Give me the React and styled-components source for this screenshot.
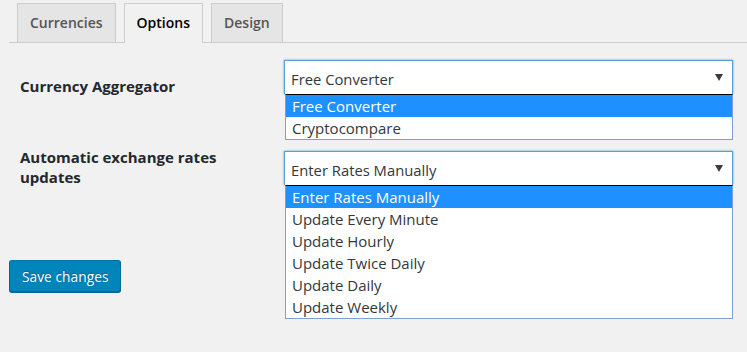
import React from 'react'
import styled, { createGlobalStyle } from 'styled-components'

const Global = createGlobalStyle`
  html, body { margin: 0; padding: 0; background: #f1f1f1; }
  body { font-family: "Open Sans", "Noto Sans", "Liberation Sans", sans-serif; color: #23282d; }
`

const Page = styled.div`
  width: 747px;
  height: 352px;
  padding: 3px 0 0 9px;
  box-sizing: border-box;
  overflow: hidden;
`

const Nav = styled.div`
  display: flex;
  align-items: flex-end;
  gap: 8px;
  padding-left: 8px;
  border-bottom: 1px solid #ccc;
`

const Tab = styled.div`
  line-height: 38px;
  padding: 0 12px;
  border: 1px solid #ccc;
  border-bottom: none;
  background: ${p => (p.$active ? '#f1f1f1' : '#e5e5e5')};
  color: ${p => (p.$active ? '#000' : '#555')};
  font-size: 14px;
  font-weight: 600;
  margin-bottom: ${p => (p.$active ? '-1px' : '0')};
  height: ${p => (p.$active ? '39px' : '38px')};
`

const Form = styled.div`
  padding-left: 11px;
`

const Row = styled.div`
  display: grid;
  grid-template-columns: 264px 449px;
  align-items: start;
  height: 34px;
  margin-top: ${p => p.$gap}px;
`

const Label = styled.div`
  margin-top: ${p => p.$offset}px;
  width: 200px;
  font-size: 15px;
  font-weight: 700;
  line-height: 20px;
  color: #23282d;
`

const SelectWrap = styled.div`
  position: relative;
`

const SelectBox = styled.div`
  height: 34px;
  box-sizing: border-box;
  border: 1px solid #5b9dd9;
  border-bottom: none;
  box-shadow: 0 0 2px rgba(30, 140, 190, 0.8);
  background: #fff;
  display: flex;
  align-items: center;
  justify-content: space-between;
  padding: 2px 9px 0 6px;
  font-size: 14.8px;
  color: #32373c;
`

const Arrow = styled.svg`
  width: 8px;
  height: 7px;
  margin-top: -3px;
`

const List = styled.ul`
  position: absolute;
  top: 34px;
  left: 1px;
  width: 448px;
  box-sizing: border-box;
  margin: 0;
  padding: 0;
  list-style: none;
  background: #fff;
  border: 1px solid #7f9fd4;
  border-top: 1px solid #000;
  z-index: 2;
`

const Option = styled.li`
  height: 22px;
  line-height: 22px;
  padding-left: 6px;
  font-size: 15px;
  background: ${p => (p.$selected ? '#1e90ff' : '#fff')};
  color: ${p => (p.$selected ? '#fff' : '#32373c')};
`

const SaveButton = styled.button`
  display: block;
  margin-top: 75px;
  height: 32px;
  padding: 0 12px;
  border: 1px solid;
  border-color: #0073aa #006799 #006799;
  border-radius: 3px;
  background: #0085ba;
  box-shadow: 0 1px 0 #006799;
  color: #fff;
  font-family: inherit;
  font-size: 13.8px;
  text-shadow: 0 -1px 1px #006799, 1px 0 1px #006799;
  cursor: pointer;
`

function Select({ value, options }) {
  return (
    <SelectWrap>
      <SelectBox>
        <span>{value}</span>
        <Arrow viewBox="0 0 8 7">
          <path d="M0 0h8L4 7z" fill="#3c3c3c" />
        </Arrow>
      </SelectBox>
      <List>
        {options.map(o => (
          <Option key={o} $selected={o === value}>{o}</Option>
        ))}
      </List>
    </SelectWrap>
  )
}

export default function App() {
  return (
    <Page>
      <Global />
      <Nav>
        <Tab>Currencies</Tab>
        <Tab $active>Options</Tab>
        <Tab>Design</Tab>
      </Nav>
      <Form>
        <Row $gap={17}>
          <Label $offset={16}>Currency Aggregator</Label>
          <Select value="Free Converter" options={['Free Converter', 'Cryptocompare']} />
        </Row>
        <Row $gap={57}>
          <Label $offset={-4}>Automatic exchange rates updates</Label>
          <Select
            value="Enter Rates Manually"
            options={[
              'Enter Rates Manually',
              'Update Every Minute',
              'Update Hourly',
              'Update Twice Daily',
              'Update Daily',
              'Update Weekly'
            ]}
          />
        </Row>
      </Form>
      <SaveButton>Save changes</SaveButton>
    </Page>
  )
}
